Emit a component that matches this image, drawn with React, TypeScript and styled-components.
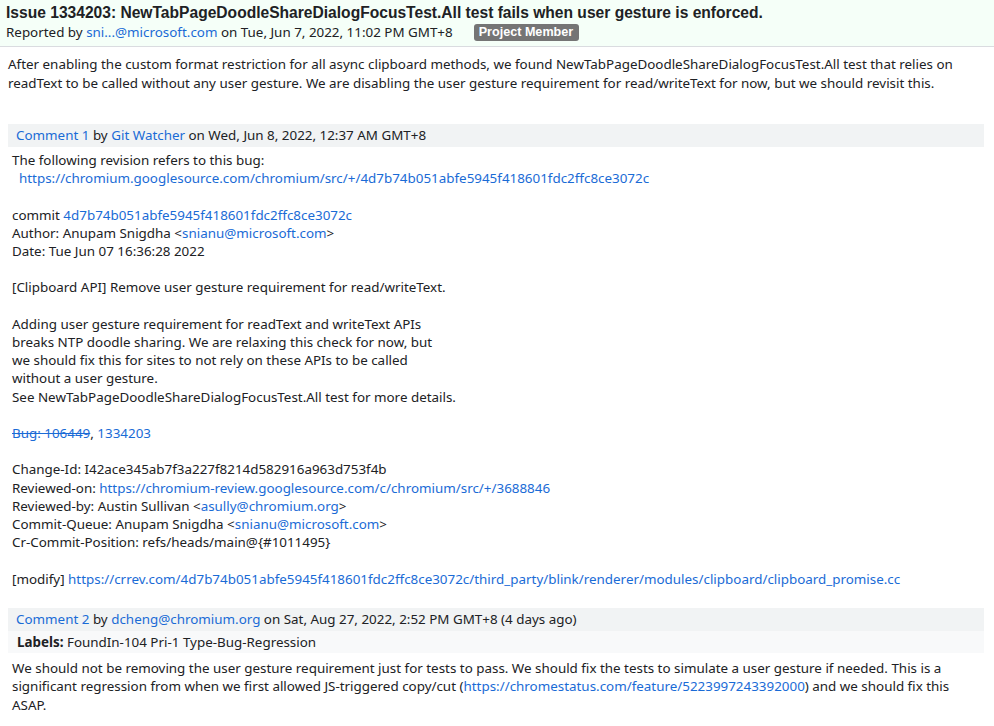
import styled, { createGlobalStyle } from 'styled-components';

const GlobalStyle = createGlobalStyle`
  body {
    margin: 0;
    background: #fff;
    color: #202124;
    font-family: "Noto Sans", "Liberation Sans", Arial, sans-serif;
    font-size: 13.4px;
  }
`;

const Link = styled.a`
  color: #1a6bd6;
  text-decoration: none;
`;

const Struck = styled(Link)`
  text-decoration: line-through;
`;

const IssueHeader = styled.header`
  background: #f5fff8;
  border-bottom: 1px solid #dadce0;
  padding: 3px 6px 4px;
`;

const Title = styled.h1`
  margin: 0;
  font-family: "Liberation Sans", Arial, sans-serif;
  font-size: 15.6px;
  font-weight: bold;
  line-height: 19px;
`;

const Reported = styled.div`
  display: flex;
  align-items: center;
  gap: 21px;
  line-height: 20px;
`;

const Badge = styled.span`
  background: #757575;
  color: #fff;
  font-family: "Liberation Sans", Arial, sans-serif;
  font-size: 12.6px;
  font-weight: bold;
  border-radius: 3px;
  padding: 0 6px 0 5px;
  line-height: 17px;
`;

const Description = styled.p`
  margin: 0;
  padding: 8px 8px 0;
  line-height: 19px;
`;

const CommentList = styled.div`
  display: flex;
  flex-direction: column;
  gap: 20px;
  padding: 31px 10px 0 8px;
`;

const Comment = styled.section``;

const CommentHead = styled.div`
  background: #f1f3f4;
  padding: 0 8px;
  line-height: 23px;
`;

const LabelsRow = styled.div`
  background: #f8f9fa;
  padding: 0 9px;
  line-height: 22px;
`;

const Bold = styled.b`
  font-weight: bold;
`;

const Body = styled.pre<{ $lh: number; $top: number }>`
  margin: 0;
  padding: ${(p) => p.$top}px 4px 0;
  font-family: inherit;
  font-size: inherit;
  white-space: pre-wrap;
  line-height: ${(p) => p.$lh}px;
`;

export default function App() {
  return (
    <>
      <GlobalStyle />
      <IssueHeader>
        <Title>
          Issue 1334203: NewTabPageDoodleShareDialogFocusTest.All test fails when user gesture is enforced.
        </Title>
        <Reported>
          <span>
            Reported by <Link href="#">sni...@microsoft.com</Link> on Tue, Jun 7, 2022, 11:02 PM GMT+8
          </span>
          <Badge>Project Member</Badge>
        </Reported>
      </IssueHeader>

      <Description>
        After enabling the custom format restriction for all async clipboard methods, we found
        NewTabPageDoodleShareDialogFocusTest.All test that relies on readText to be called without any user
        gesture. We are disabling the user gesture requirement for read/writeText for now, but we should revisit
        this.
      </Description>

      <CommentList>
        <Comment>
          <CommentHead>
            <Link href="#">Comment 1</Link> by <Link href="#">Git Watcher</Link> on Wed, Jun 8, 2022, 12:37 AM GMT+8
          </CommentHead>
          <Body $lh={18.2} $top={4}>
            {'The following revision refers to this bug:\n  '}
            <Link href="#">https://chromium.googlesource.com/chromium/src/+/4d7b74b051abfe5945f418601fdc2ffc8ce3072c</Link>
            {'\n\ncommit '}
            <Link href="#">4d7b74b051abfe5945f418601fdc2ffc8ce3072c</Link>
            {'\nAuthor: Anupam Snigdha <'}
            <Link href="#">snianu@microsoft.com</Link>
            {'>\nDate: Tue Jun 07 16:36:28 2022\n\n[Clipboard API] Remove user gesture requirement for read/writeText.\n\nAdding user gesture requirement for readText and writeText APIs\nbreaks NTP doodle sharing. We are relaxing this check for now, but\nwe should fix this for sites to not rely on these APIs to be called\nwithout a user gesture.\nSee NewTabPageDoodleShareDialogFocusTest.All test for more details.\n\n'}
            <Struck href="#">Bug: 106449</Struck>
            {', '}
            <Link href="#">1334203</Link>
            {'\n\nChange-Id: I42ace345ab7f3a227f8214d582916a963d753f4b\nReviewed-on: '}
            <Link href="#">https://chromium-review.googlesource.com/c/chromium/src/+/3688846</Link>
            {'\nReviewed-by: Austin Sullivan <'}
            <Link href="#">asully@chromium.org</Link>
            {'>\nCommit-Queue: Anupam Snigdha <'}
            <Link href="#">snianu@microsoft.com</Link>
            {'>\nCr-Commit-Position: refs/heads/main@{#1011495}\n\n[modify] '}
            <Link href="#">
              https://crrev.com/4d7b74b051abfe5945f418601fdc2ffc8ce3072c/third_party/blink/renderer/modules/clipboard/clipboard_promise.cc
            </Link>
          </Body>
        </Comment>

        <Comment>
          <CommentHead>
            <Link href="#">Comment 2</Link> by <Link href="#">dcheng@chromium.org</Link> on Sat, Aug 27, 2022, 2:52 PM
            GMT+8 (4 days ago)
          </CommentHead>
          <LabelsRow>
            <Bold>Labels:</Bold> FoundIn-104 Pri-1 Type-Bug-Regression
          </LabelsRow>
          <Body $lh={18.5} $top={6}>
            {'We should not be removing the user gesture requirement just for tests to pass. We should fix the tests to simulate a user gesture if needed. This is a significant regression from when we first allowed JS-triggered copy/cut ('}
            <Link href="#">https://chromestatus.com/feature/5223997243392000</Link>
            {') and we should fix this ASAP.'}
          </Body>
        </Comment>
      </CommentList>
    </>
  );
}
